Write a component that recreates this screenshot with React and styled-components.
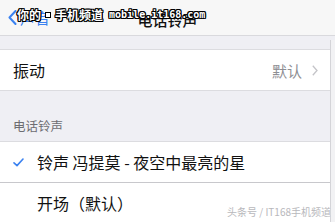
import React from "react";
import styled, { createGlobalStyle } from "styled-components";

const GlobalStyle = createGlobalStyle`
  html, body { margin: 0; padding: 0; background: #efeff4; }
  body { font-family: "Noto Sans CJK SC", "Noto Sans", sans-serif; }
`;

const Frame = styled.div`
  position: relative;
  width: 335px;
  height: 222px;
  overflow: hidden;
  display: flex;
  flex-direction: column;
  background: #efeff4;
`;

const NavBar = styled.div`
  position: relative;
  height: 36px;
  flex: none;
  background: #f7f7f7;
  border-bottom: 1px solid #d9d9dd;
  box-sizing: border-box;
  display: flex;
  align-items: center;
  padding-left: 8px;
`;

const BackLabel = styled.span`
  color: #3b82f0;
  font-size: 15px;
  margin-left: 3px;
`;

const Title = styled.div`
  position: absolute;
  left: 0;
  right: 0;
  top: 9px;
  text-align: center;
  font-size: 15px;
  font-weight: 500;
  color: #111;
`;

const Watermark = styled.div`
  position: absolute;
  left: 17px;
  top: 6px;
  display: flex;
  align-items: center;
  gap: 3px;
  color: #fff;
  font-weight: 700;
  font-size: 12px;
  white-space: nowrap;
  text-shadow: -1px -1px 0 #000, 1px -1px 0 #000, -1px 1px 0 #000, 1px 1px 0 #000,
    0 1px 0 #000, 0 -1px 0 #000, 1px 0 0 #000, -1px 0 0 #000;
`;

const Dot = styled.span`
  display: inline-block;
  width: 4px;
  height: 4px;
  background: #fff;
  border: 1px solid #000;
  margin: 0 1px;
`;

const Mono = styled.span`
  font-family: "DejaVu Sans Mono", "Liberation Mono", monospace;
  font-size: 10px;
  margin-left: 3px;
`;

const Body = styled.div`
  flex: 1;
  display: flex;
`;

const Main = styled.div`
  flex: 1;
  display: flex;
  flex-direction: column;
  padding-top: 13px;
`;

const RightEdge = styled.div`
  width: 4px;
  margin-top: 4px;
  border-left: 1px solid #d4d4d8;
  background: #f2f2f4;
`;

const Group = styled.div`
  background: #fff;
  border-top: ${(p) => (p.$top ? "1px solid #dcdce0" : "none")};
  border-bottom: 1px solid #dcdce0;
`;

const Row = styled.div`
  height: 40px;
  display: flex;
  align-items: center;
  padding: 0 12px 0 13px;
  box-sizing: border-box;
  font-size: 16px;
  color: #111;
  border-top: ${(p) => (p.$divider ? "1px solid #c8c8cc" : "none")};
`;

const Label = styled.span`
  flex: 1;
  white-space: nowrap;
`;

const Value = styled.span`
  color: #8e8e93;
  font-size: 15px;
  margin-right: 10px;
`;

const CheckSlot = styled.span`
  width: 24px;
  display: flex;
  align-items: center;
`;

const SectionHeader = styled.div`
  height: 50px;
  display: flex;
  align-items: flex-end;
  padding: 0 0 6px 13px;
  box-sizing: border-box;
  font-size: 12.5px;
  color: #6d6d72;
`;

const Credit = styled.div`
  position: absolute;
  right: 4px;
  bottom: 3px;
  font-size: 10px;
  color: #b8b8bc;
  text-shadow: 0 0 1px #fff;
  white-space: nowrap;
`;

export default function App() {
  return (
    <>
      <GlobalStyle />
      <Frame>
        <NavBar>
          <svg width="9" height="15" viewBox="0 0 9 15">
            <path d="M7.5 1 L1.5 7.5 L7.5 14" fill="none" stroke="#3b82f0" strokeWidth="2" strokeLinecap="round" strokeLinejoin="round" />
          </svg>
          <BackLabel>声音</BackLabel>
          <Title>电话铃声</Title>
          <Watermark>
            <span>你的</span>
            <Dot />
            <span>手机频道</span>
            <Mono>mobile.it168.com</Mono>
          </Watermark>
        </NavBar>
        <Body>
          <Main>
            <Group $top>
              <Row>
                <Label>振动</Label>
                <Value>默认</Value>
                <svg width="6" height="11" viewBox="0 0 6 11">
                  <path d="M0.8 0.8 L5 5.5 L0.8 10.2" fill="none" stroke="#c4c4c8" strokeWidth="1.3" />
                </svg>
              </Row>
            </Group>
            <SectionHeader>电话铃声</SectionHeader>
            <Group $top>
              <Row>
                <CheckSlot>
                  <svg width="11" height="9" viewBox="0 0 11 9">
                    <path d="M1 4.8 L4 7.6 L10 1" fill="none" stroke="#3b82f0" strokeWidth="1.6" strokeLinecap="round" strokeLinejoin="round" />
                  </svg>
                </CheckSlot>
                <Label>铃声 冯提莫 - 夜空中最亮的星</Label>
              </Row>
              <Row $divider>
                <CheckSlot />
                <Label>开场（默认）</Label>
              </Row>
            </Group>
          </Main>
          <RightEdge />
        </Body>
        <Credit>头条号 / IT168手机频道</Credit>
      </Frame>
    </>
  );
}
